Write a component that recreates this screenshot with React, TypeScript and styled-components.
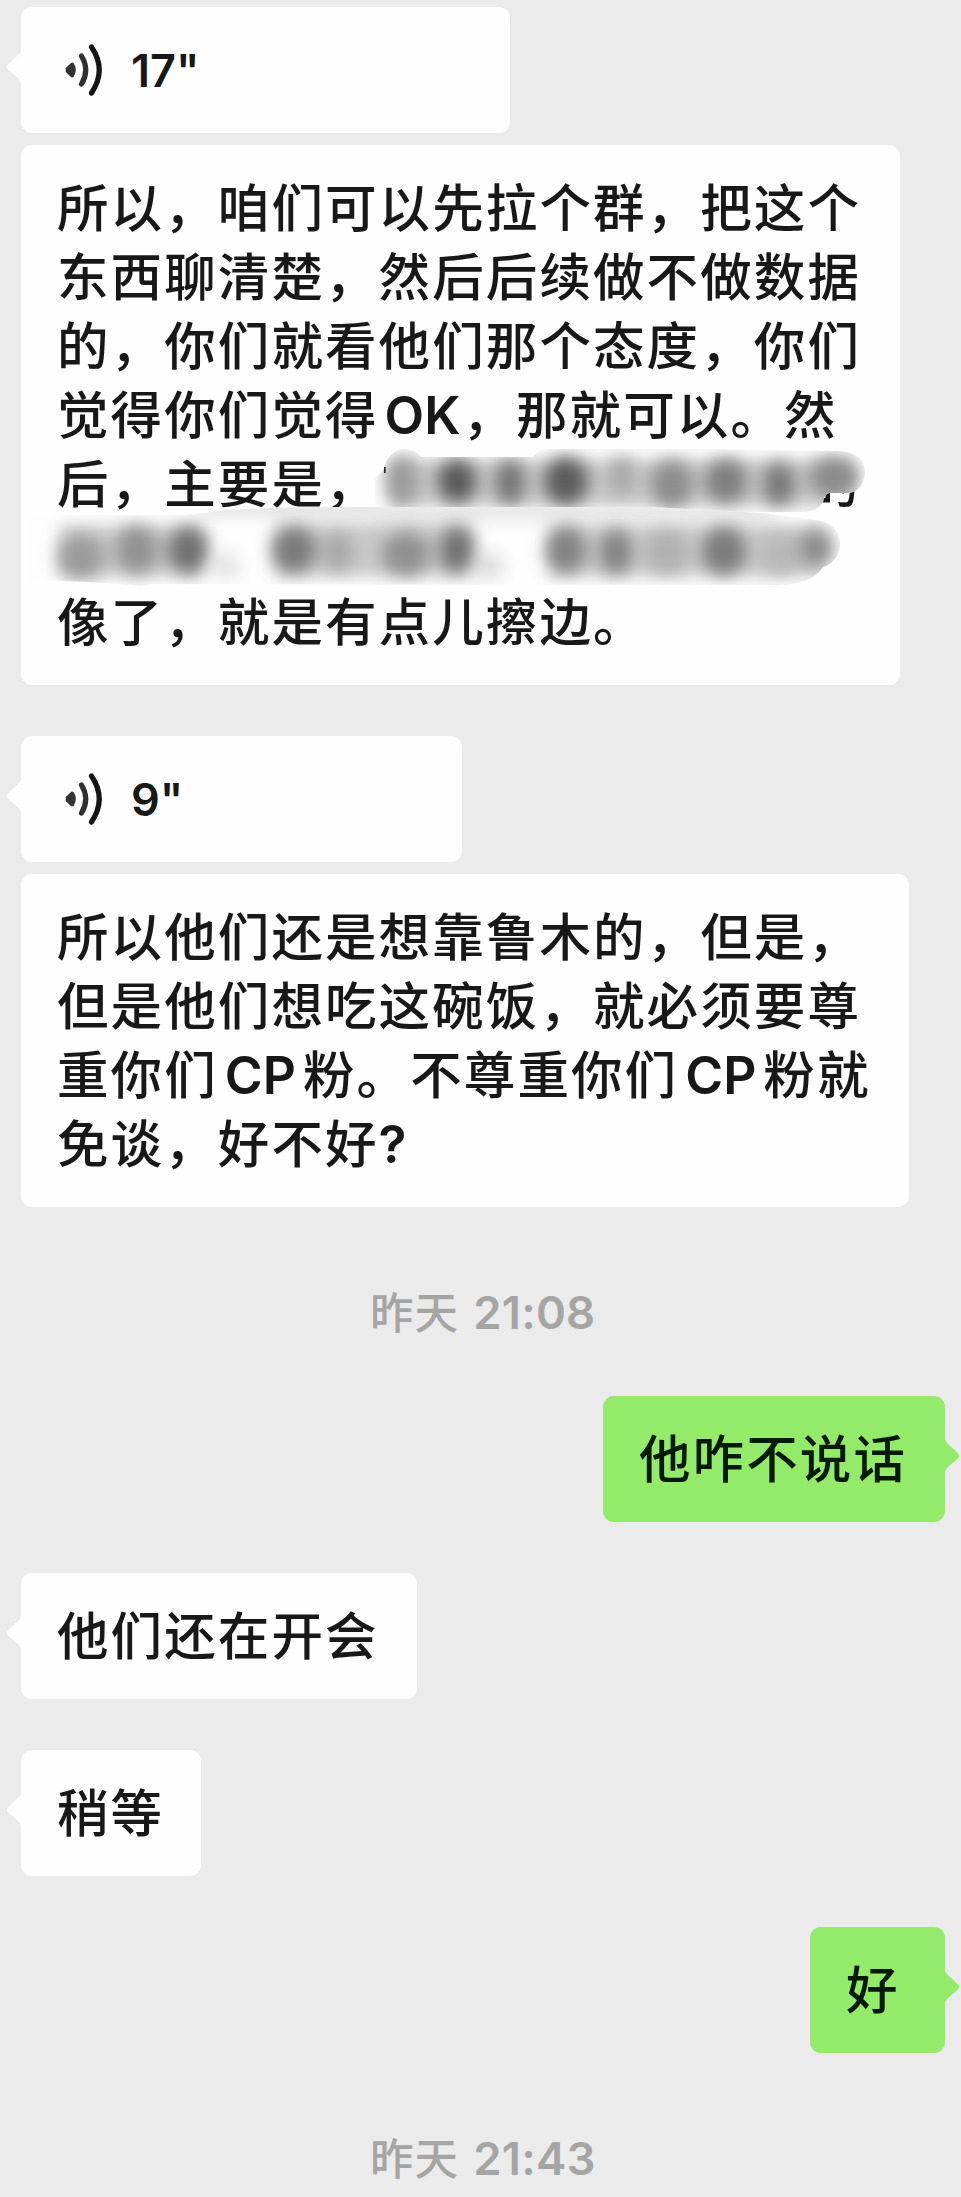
import React from 'react';
import styled, { createGlobalStyle } from 'styled-components';

const GlobalStyle = createGlobalStyle`
  body { margin: 0; background: #ebebeb; }
  * { box-sizing: border-box; }
`;

const Chat = styled.main`
  width: 961px;
  height: 2197px;
  padding: 7px 16px 0 21px;
  overflow: hidden;
  display: flex;
  flex-direction: column;
  background: #ebebeb;
  font-family: 'Noto Sans CJK SC', sans-serif;
  font-weight: 500;
  color: #181818;
`;

const Bubble = styled.div<{ $w: number; $mine?: boolean; $gap?: number }>`
  position: relative;
  flex: none;
  align-self: ${p => (p.$mine ? 'flex-end' : 'flex-start')};
  width: ${p => p.$w}px;
  margin-top: ${p => p.$gap ?? 0}px;
  padding: 24.5px 0 32.5px 36px;
  border-radius: 11px;
  background: ${p => (p.$mine ? '#94ea69' : '#fefefe')};
  color: ${p => (p.$mine ? '#031a00' : '#181818')};
`;

const TailShape = styled.svg<{ $mine?: boolean }>`
  position: absolute;
  top: 43px;
  ${p => (p.$mine ? 'right: -15px; transform: scaleX(-1);' : 'left: -15px;')}
  fill: ${p => (p.$mine ? '#94ea69' : '#fefefe')};
`;

const Line = styled.div`
  height: 69px;
  line-height: 69px;
  font-size: 51.5px;
  letter-spacing: 2.1px;
  white-space: pre;
`;

const Latin = styled.span<{ $l?: number; $r?: number }>`
  font-family: Inter, sans-serif;
  font-size: 51.5px;
  font-weight: 600;
  line-height: 0;
  letter-spacing: 0;
  margin-left: ${p => p.$l ?? 0}px;
  margin-right: ${p => p.$r ?? 0}px;
`;

const HiddenRun = styled.span`
  display: inline-block;
  width: 428.6px;
`;

const Smudge = styled.svg`
  position: absolute;
  left: 0;
  top: 300px;
`;

const Voice = styled(Bubble)`
  height: 126px;
  padding: 0 0 0 43px;
  display: flex;
  align-items: center;
`;

const Duration = styled.span`
  margin-left: 25px;
  padding-top: 1px;
  font-family: Inter, sans-serif;
  font-size: 45px;
  font-weight: 600;
  line-height: 60px;
`;

const Stamp = styled.time<{ $top: number }>`
  display: block;
  flex: none;
  margin-top: ${p => p.$top}px;
  height: 60px;
  padding-left: 349px;
  line-height: 60px;
  font-size: 43.5px;
  letter-spacing: 1.1px;
  color: #a5a5a5;
`;

const Clock = styled.span`
  margin-left: 14px;
  font-family: Inter, sans-serif;
  font-size: 45.5px;
  font-weight: 600;
  line-height: 0;
  letter-spacing: 0.2px;
`;

const Tail = ({ mine }: { mine?: boolean }) => (
  <TailShape $mine={mine} width="16" height="34" viewBox="0 0 16 34">
    <path d="M16 0 L15 1 Q14 3 12 5 L1.5 15 Q0 17 1.5 19 L12 28 Q14.5 30.5 15 33 L16 34Z" />
  </TailShape>
);

const VoiceIcon = () => (
  <svg width="42" height="56" viewBox="0 0 42 56" fill="none" strokeLinecap="round">
    <path d="M2 28 Q1 26.8 2 25.8 L7 21 Q8.5 20 9.7 21.3 Q14 28 9.7 34.7 Q8.5 36 7 35 L2 30.2 Q1 29 2 28Z" fill="#333" />
    <path d="M17.5 14 Q26 28 17.5 42" stroke="#303030" strokeWidth="5.2" />
    <path d="M27.5 5 Q43 28 27.5 51" stroke="#141414" strokeWidth="5.2" />
  </svg>
);

type Spot = [x: number, y: number, rx: number, ry: number, fill: string];

const upperSpots: Spot[] = [
  [402, 481, 16, 25, '#9a9a9a'],
  [457, 481, 19, 22, '#585858'],
  [510, 482, 15, 23, '#747474'],
  [566, 481, 22, 24, '#5c5c5c'],
  [622, 476, 12, 20, '#a6a6a6'],
  [672, 484, 21, 24, '#8c8c8c'],
  [726, 481, 21, 22, '#7e7e7e'],
  [779, 484, 16, 22, '#787878'],
  [834, 477, 25, 20, '#8a8a8a'],
];

const lowerSpots: Spot[] = [
  [81, 557, 23, 22, '#9a9a9a'],
  [137, 550, 21, 24, '#929292'],
  [188, 550, 20, 23, '#707070'],
  [225, 566, 14, 13, '#e0e0e0'],
  [294, 550, 22, 23, '#7a7a7a'],
  [338, 552, 14, 20, '#a6a6a6'],
  [406, 554, 24, 22, '#909090'],
  [457, 550, 17, 23, '#707070'],
  [488, 566, 15, 13, '#dadada'],
  [566, 550, 20, 23, '#828282'],
  [616, 552, 16, 23, '#828282'],
  [667, 552, 22, 22, '#b0b0b0'],
  [724, 551, 22, 24, '#7c7c7c'],
  [780, 554, 22, 20, '#b8b8b8'],
  [816, 548, 17, 18, '#8a8a8a'],
];

const Spots = ({ items }: { items: Spot[] }) => (
  <g filter="url(#soft)">
    {items.map(([x, y, rx, ry, fill]) => (
      <ellipse key={x} cx={x} cy={y} rx={rx} ry={ry} fill={fill} />
    ))}
  </g>
);

const Redaction = () => (
  <Smudge width="879" height="146" viewBox="21 445 879 146">
    <defs>
      <filter id="soft" x="-10%" y="-40%" width="120%" height="180%">
        <feGaussianBlur stdDeviation="8.5" />
      </filter>
      <filter id="wide" x="-10%" y="-40%" width="120%" height="180%">
        <feGaussianBlur stdDeviation="8" />
      </filter>
      <clipPath id="upper">
        <path d="M375 478 Q384 472 386 462 Q393 449 405 449 Q416 450 421 457 H533 Q539 449 547 449 L700 449 L840 451 Q865 453 865 474 Q862 492 848 493 H829 Q824 494 823 502 Q818 511 804 512 H375Z" />
      </clipPath>
      <clipPath id="lower">
        <path d="M30 515 H185 Q205 513 225 510 Q270 507 350 507 H650 L762 513 L822 521 Q840 527 840 545 Q838 562 823 567 Q812 584 780 585 L150 584 L142 586 Q90 581 30 580Z" />
      </clipPath>
    </defs>
    <g clipPath="url(#upper)">
      <rect x="370" y="445" width="500" height="70" fill="#fdfdfd" />
      <rect x="390" y="460" width="463" height="46" fill="#c6c6c6" filter="url(#wide)" />
      <Spots items={upperSpots} />
    </g>
    <g clipPath="url(#lower)">
      <rect x="30" y="505" width="820" height="84" fill="#fdfdfd" />
      <g filter="url(#wide)">
        <rect x="375" y="500" width="400" height="20" fill="#e6e6e6" />
        <rect x="200" y="500" width="175" height="14" fill="#dcdcdc" />
        <rect x="60" y="526" width="144" height="50" fill="#c8c8c8" />
        <rect x="276" y="524" width="196" height="52" fill="#c8c8c8" />
        <rect x="550" y="526" width="276" height="50" fill="#c8c8c8" />
      </g>
      <Spots items={lowerSpots} />
    </g>
    <rect x="384" y="467" width="1.6" height="6" fill="#222" />
  </Smudge>
);

export default function App() {
  return (
    <>
      <GlobalStyle />
      <Chat>
        <Voice $w={489}>
          <Tail />
          <VoiceIcon />
          <Duration>17"</Duration>
        </Voice>
        <Bubble $w={879} $gap={12}>
          <Line>所以，咱们可以先拉个群，把这个</Line>
          <Line>东西聊清楚，然后后续做不做数据</Line>
          <Line>的，你们就看他们那个态度，你们</Line>
          <Line>觉得你们觉得<Latin $l={6} $r={2}>OK</Latin>，那就可以。然</Line>
          <Line>后，主要是，<HiddenRun />的</Line>
          <Line />
          <Line>像了，就是有点儿擦边。</Line>
          <Redaction />
        </Bubble>
        <Voice $w={441} $gap={51}>
          <Tail />
          <VoiceIcon />
          <Duration>9"</Duration>
        </Voice>
        <Bubble $w={888} $gap={12}>
          <Line>所以他们还是想靠鲁木的，但是，</Line>
          <Line>但是他们想吃这碗饭，就必须要尊</Line>
          <Line>重你们<Latin $l={7} $r={7}>CP</Latin>粉。不尊重你们<Latin $l={7} $r={7}>CP</Latin>粉就</Line>
          <Line>免谈，好不好<Latin>?</Latin></Line>
        </Bubble>
        <Stamp $top={74}>昨天<Clock>21:08</Clock></Stamp>
        <Bubble $mine $w={342} $gap={55}>
          <Tail mine />
          <Line>他咋不说话</Line>
        </Bubble>
        <Bubble $w={396} $gap={51}>
          <Tail />
          <Line>他们还在开会</Line>
        </Bubble>
        <Bubble $w={180} $gap={51}>
          <Tail />
          <Line>稍等</Line>
        </Bubble>
        <Bubble $mine $w={135} $gap={51}>
          <Tail mine />
          <Line>好</Line>
        </Bubble>
        <Stamp $top={74}>昨天<Clock>21:43</Clock></Stamp>
      </Chat>
    </>
  );
}
